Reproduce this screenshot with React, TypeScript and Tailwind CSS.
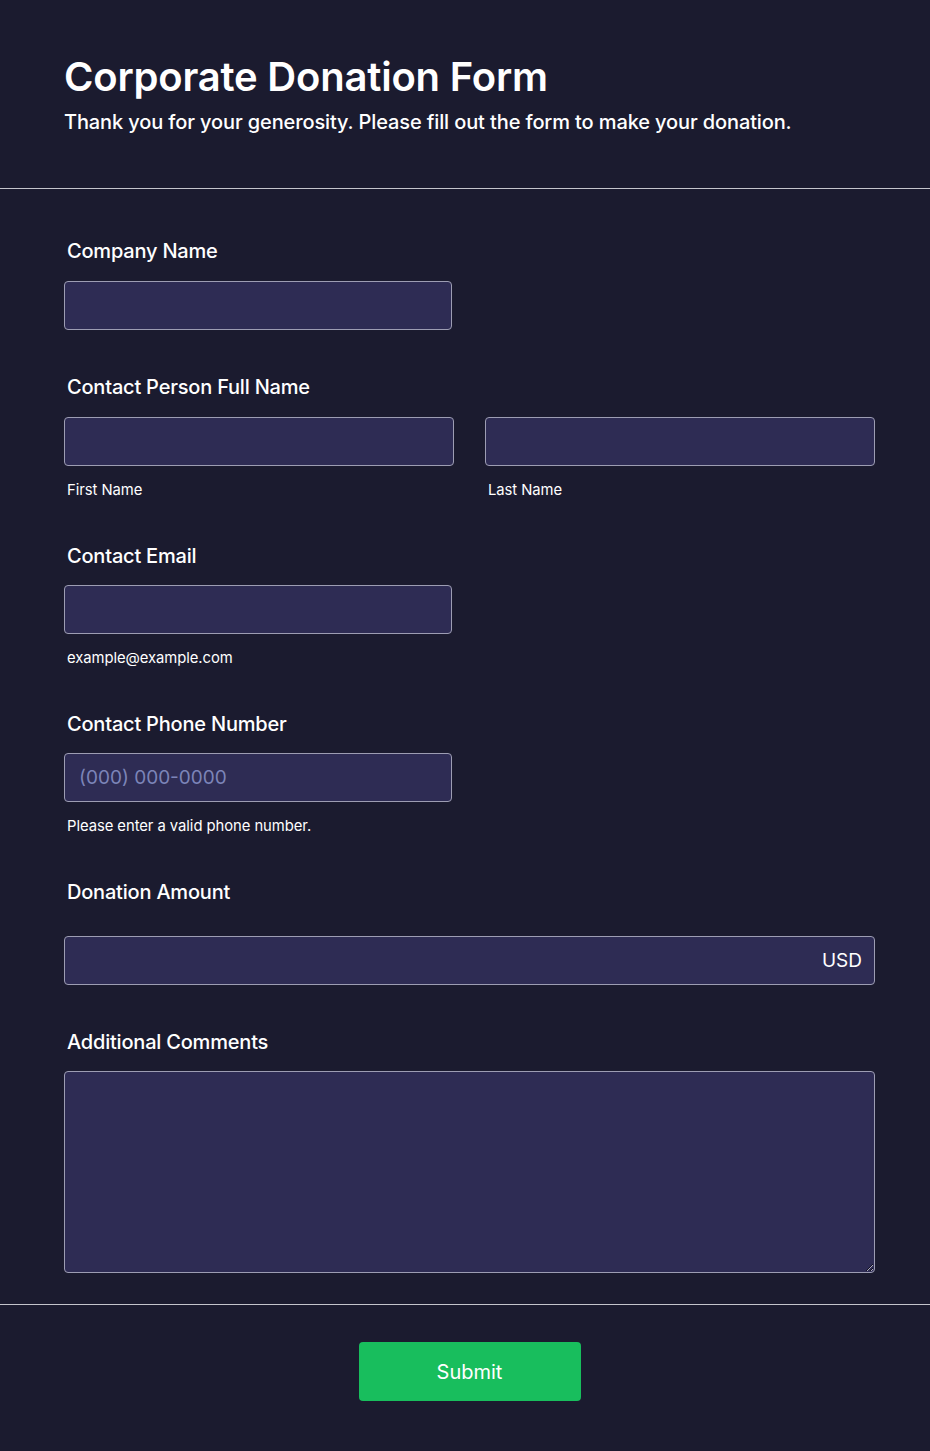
const inputCls =
  'h-[49px] rounded-[4px] border border-[#9d9db3] bg-[#2e2c54] px-[14px] text-[19px] text-white outline-none placeholder:text-[#7c84b8]';

function Label({ children }: { children: React.ReactNode }) {
  return (
    <label className="ml-[3px] block text-[20px] font-medium leading-[28px] tracking-[-0.2px] text-white">
      {children}
    </label>
  );
}

function Hint({ children }: { children: React.ReactNode }) {
  return <p className="ml-[3px] mt-[14px] text-[14.8px] leading-[20px] tracking-[-0.05px] text-white">{children}</p>;
}

export default function App() {
  return (
    <div className="min-h-[1451px] bg-[#1b1b2f] font-['Inter',sans-serif] text-white">
      <header className="px-[64px] pb-[52px] pt-[53px]">
        <h1 className="text-[40px] font-semibold leading-[48px] tracking-[-0.2px]">Corporate Donation Form</h1>
        <p className="mt-[7px] text-[20px] font-medium leading-[28px] tracking-[-0.12px]">
          Thank you for your generosity. Please fill out the form to make your donation.
        </p>
      </header>

      <div className="border-t border-[#c4c4cc]" />

      <form className="flex flex-col pl-[64px] pr-[55px] pt-[48px]" onSubmit={(e) => e.preventDefault()}>
        <div>
          <Label>Company Name</Label>
          <input className={`${inputCls} mt-[16px] w-[388px]`} />
        </div>

        <div className="mt-[43px]">
          <Label>Contact Person Full Name</Label>
          <div className="mt-[16px] grid grid-cols-2 gap-[31px]">
            <div>
              <input className={`${inputCls} w-full`} />
              <Hint>First Name</Hint>
            </div>
            <div>
              <input className={`${inputCls} w-full`} />
              <Hint>Last Name</Hint>
            </div>
          </div>
        </div>

        <div className="mt-[42px]">
          <Label>Contact Email</Label>
          <input className={`${inputCls} mt-[15px] w-[388px]`} />
          <Hint>example@example.com</Hint>
        </div>

        <div className="mt-[42px]">
          <Label>Contact Phone Number</Label>
          <input className={`${inputCls} mt-[15px] w-[388px]`} placeholder="(000) 000-0000" />
          <Hint>Please enter a valid phone number.</Hint>
        </div>

        <div className="mt-[42px]">
          <Label>Donation Amount</Label>
          <div className="mt-[30px] flex h-[49px] items-center rounded-[4px] border border-[#9d9db3] bg-[#2e2c54] pl-[14px] pr-[12px]">
            <input className="h-full flex-1 bg-transparent text-[19px] text-white outline-none" />
            <span className="text-[19px] leading-none text-white">USD</span>
          </div>
        </div>

        <div className="mt-[43px]">
          <Label>Additional Comments</Label>
          <textarea className="mt-[15px] block h-[202px] w-full rounded-[4px] border border-[#9d9db3] bg-[#2e2c54] p-[14px] text-[19px] text-white outline-none" />
        </div>
      </form>

      <div className="mt-[31px] border-t border-[#c4c4cc]" />

      <div className="flex justify-center pb-[50px] pl-[64px] pr-[55px] pt-[37px]">
        <button
          type="button"
          className="h-[59px] w-[222px] rounded-[4px] bg-[#18be5d] text-[20px] text-white"
        >
          Submit
        </button>
      </div>
    </div>
  );
}
